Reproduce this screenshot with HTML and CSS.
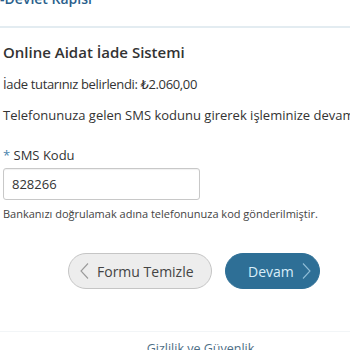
FILE: index.html
```html
<!DOCTYPE html>
<html lang="tr">
<head>
<meta charset="utf-8">
<link rel="stylesheet" href="styles.css">
</head>
<body>
<div class="topbar"><span class="brand">e-Devlet Kapısı</span></div>
<main class="content">
  <h1 class="title">Online Aidat İade Sistemi</h1>
  <p class="line line-first">İade tutarınız belirlendi: ₺2.060,00</p>
  <p class="line line-second">Telefonunuza gelen SMS kodunu girerek işleminize devam edebilirsiniz.</p>
  <label class="label"><span class="req">*</span> SMS Kodu</label>
  <div class="input">828266</div>
  <p class="help">Bankanızı doğrulamak adına telefonunuza kod gönderilmiştir.</p>
  <div class="actions">
    <button class="btn btn-clear"><svg class="chev" width="9" height="16" viewBox="0 0 9 16"><polyline points="8,0.5 1,8 8,15.5" fill="none" stroke="#9a9a9a" stroke-width="1.1"/></svg><span class="btn-text">Formu Temizle</span></button>
    <button class="btn btn-next"><span class="btn-text">Devam</span><svg class="chev" width="9" height="16" viewBox="0 0 9 16"><polyline points="1,0.5 8,8 1,15.5" fill="none" stroke="#8fbcd6" stroke-width="1.1"/></svg></button>
  </div>
</main>
<footer class="footer"><span class="flink">Gizlilik ve Güvenlik</span></footer>
</body>
</html>
```
FILE: styles.css
```css
html, body {
  margin: 0;
  padding: 0;
  background: #fff;
  overflow: hidden;
}
body {
  font-family: "Open Sans", "DejaVu Sans", sans-serif;
  color: #333;
  width: 350px;
  height: 350px;
}
.topbar {
  height: 26px;
  border-bottom: 2px solid #e3ecf1;
  overflow: hidden;
}
.brand {
  display: block;
  margin-top: -11px;
  margin-left: -8px;
  font-size: 14px;
  line-height: 20px;
  color: #2b5f8c;
  font-weight: 600;
  white-space: nowrap;
}
.content {
  padding: 0 0 0 3px;
}
.title {
  margin: 14px 0 0;
  font-size: 15px;
  font-weight: 600;
  line-height: 20px;
  color: #333;
}
.line {
  font-size: 13px;
  line-height: 20px;
  color: #333;
  white-space: nowrap;
}
.line-first {
  margin: 12px 0 0;
  letter-spacing: -0.35px;
}
.line-second {
  margin: 11px 0 0;
}
.label {
  display: block;
  margin-top: 20px;
  font-size: 13px;
  line-height: 20px;
  color: #333;
}
.req {
  color: #4a84ad;
}
.input {
  box-sizing: border-box;
  margin-top: 3px;
  width: 197px;
  height: 32px;
  border: 1px solid #c8c8c8;
  border-radius: 3px;
  padding: 0 0 0 8px;
  font-size: 13px;
  line-height: 30px;
  color: #333;
  box-shadow: inset 0 1px 1px rgba(0,0,0,0.06);
}
.help {
  margin: 6px 0 0;
  font-size: 11px;
  line-height: 16px;
  color: #444;
  white-space: nowrap;
}
.actions {
  margin-top: 31px;
  display: flex;
  gap: 13px;
  padding-left: 65px;
}
.btn {
  box-sizing: border-box;
  height: 36px;
  border-radius: 18px;
  font-family: "Open Sans", "DejaVu Sans", sans-serif;
  font-size: 14px;
  display: flex;
  align-items: center;
  white-space: nowrap;
  cursor: pointer;
}
.btn-clear {
  width: 144px;
  background: #ededed;
  border: 1px solid #c5c5c5;
  color: #444;
  padding: 0 0 0 11px;
  gap: 8px;
}
.btn-next {
  width: 95px;
  background: #2e6f96;
  border: 1px solid #2e6f96;
  color: #d9eef9;
  padding: 0 0 0 22px;
  gap: 8px;
}
.chev {
  display: block;
  flex: none;
}
.footer {
  margin-top: 42px;
  border-top: 1px solid #f2f5f7;
  text-align: center;
  padding-top: 5px;
  padding-left: 51px;
  line-height: 20px;
}
.flink {
  font-size: 12.5px;
  color: #4d6e86;
}
```
